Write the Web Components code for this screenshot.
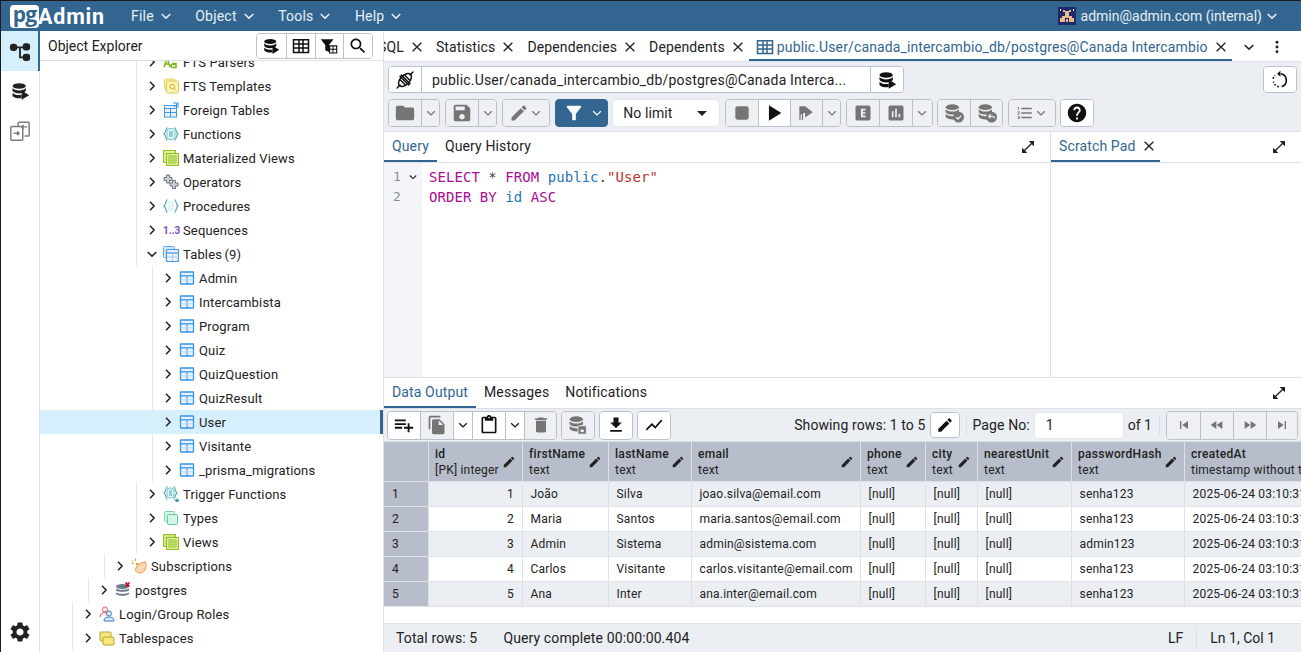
<!DOCTYPE html>
<html lang="en">
<head>
<meta charset="utf-8">
<title>pgAdmin</title>
<style>
html, body { margin: 0; height: 100%; overflow: hidden; background: #1b1b1b; }
body { padding: 1px 0 0 1px; box-sizing: border-box; font: 14px Roboto, "Liberation Sans", sans-serif; color: #222; }
pg-app { height: 651px; }
</style>
</head>
<body>
<pg-app></pg-app>
<script>
const M = (d, fill = 'currentColor') => `<path fill="${fill}" d="${d}"/>`;
const DB = (c = 'currentColor') => `<ellipse cx="10" cy="5" rx="8" ry="3.4" fill="${c}"/><path fill="${c}" d="M2 7.4c1.5 2 4.6 2.9 8 2.9s6.500-.9 8-2.900V11c-1.500 2-4.600 2.900-8 2.900S3.500 13 2 11zM2 13c1.500 2 4.600 2.900 8 2.900 1 0 2-.1 3-.3v3.900c-1 .2-2 .3-3 .3-3.400 0-6.500-1.100-8-2.900z"/>`;
const ICONS = {
  right: '<path d="M9 5.500l6.200 6.500L9 18.500" fill="none" stroke="currentColor" stroke-width="2.200"/>',
  down: '<path d="M5.500 9l6.500 6.200L18.500 9" fill="none" stroke="currentColor" stroke-width="2.200"/>',
  close: '<path d="M5.500 5.500l13 13M18.500 5.500l-13 13" fill="none" stroke="currentColor" stroke-width="2"/>',
  expand: M('M21 11V3h-8l3.290 3.290-10 10L3 13v8h8l-3.290-3.290 10-10z'),
  search: M('M15.500 14h-.79l-.28-.27C15.410 12.590 16 11.110 16 9.500 16 5.910 13.090 3 9.500 3S3 5.910 3 9.500 5.910 16 9.500 16c1.610 0 3.090-.59 4.230-1.570l.27.280v.79l5 4.990L20.490 19l-4.990-5zm-6 0C7.010 14 5 11.990 5 9.500S7.010 5 9.500 5 14 7.010 14 9.500 11.990 14 9.500 14z'),
  settings: M('M19.140 12.940c.04-.3.06-.61.06-.94 0-.32-.02-.64-.07-.94l2.030-1.580c.18-.14.23-.41.12-.61l-1.920-3.320c-.12-.22-.37-.29-.59-.22l-2.390.96c-.5-.38-1.030-.7-1.620-.94l-.36-2.540c-.04-.24-.24-.41-.48-.41h-3.840c-.24 0-.43.17-.47.41l-.36 2.540c-.59.24-1.130.57-1.620.94l-2.390-.96c-.22-.08-.47 0-.59.22L2.740 8.870c-.12.21-.08.47.12.61l2.030 1.580c-.05.3-.09.63-.09.94s.02.64.07.94l-2.030 1.580c-.18.14-.23.41-.12.61l1.920 3.320c.12.22.37.29.59.22l2.390-.96c.5.38 1.030.7 1.620.94l.36 2.540c.05.24.24.41.48.41h3.840c.24 0 .44-.17.47-.41l.36-2.540c.59-.24 1.130-.56 1.620-.94l2.390.96c.22.08.47 0 .59-.22l1.920-3.320c.12-.22.07-.47-.12-.61l-2.010-1.580zM12 15.600c-1.980 0-3.600-1.620-3.600-3.600s1.620-3.600 3.600-3.600 3.600 1.620 3.600 3.600-1.620 3.600-3.600 3.600z'),
  folder: M('M10 4H4c-1.100 0-1.990.9-1.990 2L2 18c0 1.100.9 2 2 2h16c1.100 0 2-.9 2-2V8c0-1.100-.9-2-2-2h-8l-2-2z'),
  save: M('M17 3H5c-1.110 0-2 .9-2 2v14c0 1.100.89 2 2 2h14c1.100 0 2-.9 2-2V7l-4-4zm-5 16c-1.660 0-3-1.340-3-3s1.340-3 3-3 3 1.340 3 3-1.340 3-3 3zm3-10H5V5h10v4z'),
  pencil: M('M3 17.250V21h3.750L17.810 9.940l-3.750-3.750L3 17.250zM20.710 7.040c.39-.39.39-1.020 0-1.410l-2.340-2.340c-.39-.39-1.020-.39-1.410 0l-1.830 1.830 3.750 3.750 1.830-1.830z'),
  filter: M('M4.250 5.610C6.270 8.200 10 13 10 13v6c0 .55.45 1 1 1h2c.55 0 1-.45 1-1v-6s3.720-4.800 5.740-7.390c.51-.66.04-1.610-.79-1.610H5.040c-.83 0-1.300.95-.79 1.610z'),
  stop: '<rect x="4" y="4" width="16" height="16" rx="2.500" fill="currentColor"/>',
  play: M('M6.500 3.500v17L20 12z'),
  runpart: M('M4 4h7l9 7-9 6.500V12H8.500v8H4z') + '<path d="M5.500 13.500h1.500V20H5.500z" fill="#eef0f4"/>',
  ebox: '<path fill="currentColor" fill-rule="evenodd" d="M5 3h14a2 2 0 0 1 2 2v14a2 2 0 0 1-2 2H5a2 2 0 0 1-2-2V5a2 2 0 0 1 2-2zm4.500 4v10h5.500v-2h-3.200v-2h3.200v-2h-3.200V9h3.200V7z"/>',
  chart: M('M19 3H5c-1.100 0-2 .9-2 2v14c0 1.100.9 2 2 2h14c1.100 0 2-.9 2-2V5c0-1.100-.9-2-2-2zM9 17H7v-7h2v7zm4 0h-2V7h2v10zm4 0h-2v-4h2v4z'),
  numlist: M('M2 17h2v.5H3v1h1v.5H2v1h3v-4H2v1zm1-9h1V4H2v1h1v3zm-1 3h1.800L2 13.100v.9h3v-1H3.200L5 10.900V10H2v1zm5-6v2h14V5H7zm0 14h14v-2H7v2zm0-6h14v-2H7v2z'),
  help: M('M12 2C6.480 2 2 6.480 2 12s4.480 10 10 10 10-4.480 10-10S17.520 2 12 2zm1 17h-2v-2h2v2zm2.070-7.750l-.9.920C13.450 12.900 13 13.500 13 15h-2v-.5c0-1.100.45-2.100 1.170-2.830l1.240-1.260c.37-.36.59-.86.59-1.410 0-1.100-.9-2-2-2s-2 .9-2 2H8c0-2.210 1.790-4 4-4s4 1.790 4 4c0 .88-.36 1.680-.93 2.250z'),
  addrow: M('M14 10H2v2h12v-2zm0-4H2v2h12V6zm4 8v-4h-2v4h-4v2h4v4h2v-4h4v-2h-4zM2 16h8v-2H2v2z'),
  copy: M('M16 1H4c-1.100 0-2 .9-2 2v14h2V3h12V1zm-1 4l6 6v10c0 1.100-.9 2-2 2H7.990C6.890 23 6 22.100 6 21l.01-14c0-1.100.89-2 1.990-2h7zm-1 7h5.500L14 6.500V12z'),
  paste: M('M19 2h-4.180C14.400.84 13.300 0 12 0c-1.300 0-2.400.84-2.820 2H5c-1.100 0-2 .9-2 2v16c0 1.100.9 2 2 2h14c1.100 0 2-.9 2-2V4c0-1.100-.9-2-2-2zm-7 0c.55 0 1 .45 1 1s-.45 1-1 1-1-.45-1-1 .45-1 1-1zm7 18H5V4h2v3h10V4h2v16z'),
  trash: M('M6 19c0 1.100.9 2 2 2h8c1.100 0 2-.9 2-2V7H6v12zM19 4h-3.500l-1-1h-5l-1 1H5v2h14V4z'),
  download: M('M19 9h-4V3H9v6H5l7 7 7-7zM5 18v2h14v-2H5z'),
  graph: M('M3.500 18.490l6-6.010 4 4L22 6.920l-1.410-1.410-7.090 7.970-4-4L2 16.990z'),
  first: M('M6 6h2v12H6zm3.500 6l8.500 6V6z'),
  prev: M('M11 18V6l-8.500 6 8.500 6zm.5-6l8.500 6V6l-8.500 6z'),
  next: M('M4 18l8.500-6L4 6v12zm9-12v12l8.500-6L13 6z'),
  last: M('M6 18l8.500-6L6 6v12zM16 6v12h2V6h-2z'),
  dots: '<circle cx="12" cy="5" r="2.200" fill="currentColor"/><circle cx="12" cy="12" r="2.200" fill="currentColor"/><circle cx="12" cy="19" r="2.200" fill="currentColor"/>',
  reset: '<path d="M13 4.500a8 8 0 0 1 1 15.500" fill="none" stroke="currentColor" stroke-width="2"/><path d="M10.500 20.200a8 8 0 0 1-6.300-6.200M3.800 10.500a8 8 0 0 1 2.500-4" fill="none" stroke="currentColor" stroke-width="2" stroke-dasharray="2 2"/><path d="M12.500 1l-4 3.500 4 3.500z" fill="currentColor"/>',
  plug: '<g fill="none" stroke="currentColor" stroke-width="1.800" stroke-linecap="round"><path d="M2.500 21.500l3.500-3.500M21.500 2.500L18 6"/><ellipse cx="12" cy="12" rx="9.500" ry="5.500" transform="rotate(-45 12 12)"/><path d="M6 7.500l10.500 10.500M7.500 6L18 16.500M12 6.500l5.500 5.500M6.500 12l5.500 5.500" /></g>',
  dbrun: `<g transform="translate(1 1)">${DB()}</g>` + M('M14 11.500l9 5.500-9 5.500z'),
  dbcheck: `${DB()}<circle cx="17.500" cy="17" r="6.500" fill="currentColor"/><path d="M14.500 17l2.200 2.200 4-4" fill="none" stroke="#ebeef3" stroke-width="1.600"/>`,
  dbundo: `${DB()}<circle cx="17.500" cy="17" r="6.500" fill="currentColor"/><path d="M14 16h4.500a2.500 2.500 0 0 1 2.500 2.500M16.500 13.500L14 16l2.500 2.500" fill="none" stroke="#ebeef3" stroke-width="1.500"/>`,
  dbsave: `${DB()}<rect x="12" y="13" width="10" height="10" rx="1" fill="currentColor" stroke="#ebeef3"/><rect x="15" y="17.500" width="4" height="3" fill="#ebeef3"/>`,
  grid: '<path fill="currentColor" fill-rule="evenodd" d="M1 2.500h22v19H1zm2 2v3.700h5.300V4.500zm7.300 0v3.700h3.400V4.500zm5.400 0v3.700H21V4.500zM3 10.200v3.600h5.300v-3.600zm7.300 0v3.600h3.400v-3.600zm5.400 0v3.600H21v-3.600zM3 15.800v3.700h5.300v-3.700zm7.300 0v3.700h3.400v-3.700zm5.400 0v3.700H21v-3.700z"/>',
  filtergrid: M('M1 3h17l-6 7.500V20l-5-2.500v-7z') + '<path fill="currentColor" fill-rule="evenodd" d="M12 11h11v11H12zm1.500 1.500v3h3.200v-3zm4.500 0v3h3.500v-3zm-4.500 4.500v3.500h3.200V17zm4.500 0v3.500h3.500V17z"/>',
  schema: '<g stroke="currentColor" stroke-width="2" fill="none"><path d="M5 8h14M12 8v11h7"/></g><rect x="1" y="4" width="8" height="8" rx="3.500" fill="currentColor"/><rect x="15" y="3.500" width="8" height="8" rx="3" fill="currentColor"/><rect x="15" y="15" width="8" height="8" rx="3" fill="currentColor"/>',
  compare: '<g fill="none" stroke="currentColor" stroke-width="1.600"><path d="M10 6.500V3.500a1 1 0 0 1 1-1h10a1 1 0 0 1 1 1v13a1 1 0 0 1-1 1h-4"/><rect x="2" y="7" width="13" height="15" rx="1"/><path d="M20 7.500h-6M16 5.500l-2 2 2 2M5 14.500h6M9 12.500l2 2-2 2"/></g>'
};
const TREE = {
  parsers: '<path fill="none" stroke="#7cb518" stroke-width="1.500" d="M1 13l3-9 3 9M2 10h4M9 9.500h4v4H9.500a1.500 1.500 0 0 1 0-3H13"/>',
  templates: '<rect x="1.500" y="1" width="11" height="11" rx="2" fill="#fff3ba" stroke="#e2cc55"/><rect x="3.500" y="3" width="12" height="12" rx="2" fill="#fdf3b4" stroke="#dcc64e"/><circle cx="9.300" cy="8.500" r="2.300" fill="none" stroke="#c9ae2c"/><path d="M11 10.300l2 2" stroke="#c9ae2c"/>',
  foreign: '<rect x="1.500" y="3.500" width="12" height="11.500" fill="#eef1f4" stroke="#3d9ae8"/><path d="M1.500 6.500h12M1.500 10.500h12M7.500 6.500V15" stroke="#3d9ae8" stroke-width="1" fill="none"/><path d="M10 1h5v5M15 1l-4 4" stroke="#2a8fe0" fill="none"/>',
  functions: '<g fill="none" stroke="#4fa9b6" stroke-width="1.200"><path d="M4.500 1.500C2.500 2 3.500 6.500 1 8c2.500 1.500 1.500 6 3.500 6.500M11.500 1.500C13.500 2 12.500 6.500 15 8c-2.500 1.500-1.500 6-3.500 6.500"/></g><rect x="4" y="2.500" width="8" height="11" rx="3" fill="#e3f5f6" stroke="#7cc6cf"/><path d="M6 6h4M6 8h4M6 10h4" stroke="#4fa9b6"/>',
  matviews: '<rect x=".5" y=".5" width="12" height="12" fill="#dcef9e" stroke="#93c01f"/><rect x="3.500" y="3.500" width="12" height="12" fill="#dcef9e" stroke="#93c01f"/><rect x="6" y="6" width="7" height="7" fill="none" stroke="#93c01f"/><rect x="8" y="8" width="3" height="3" fill="none" stroke="#93c01f"/>',
  operators: '<path fill="#c9ced6" stroke="#6f7782" d="M3.500 1h3v2.500H9v3H6.500V9h-3V6.500H1v-3h2.500zM9.500 6.500h3V9H15v3h-2.500v2.500h-3V12H7V9h2.500z"/>',
  procedures: '<g fill="none" stroke-width="1.200"><path stroke="#4fa9b6" d="M4.500 1.500C2.500 2 3.500 6.500 1 8c2.500 1.500 1.500 6 3.500 6.500M11.500 1.500C13.500 2 12.500 6.500 15 8c-2.500 1.500-1.500 6-3.500 6.500"/></g><path fill="#e3f5f6" d="M5 3h6v10H5z"/>',
  tables: '<rect x=".5" y=".5" width="11" height="11" rx="1" fill="#d8e9fa" stroke="#5aa9ee"/><rect x="3.500" y="3.500" width="12" height="12" rx="1" fill="#eef1f4" stroke="#3d9ae8" stroke-width="1.200"/><path d="M3.500 7h12M3.500 11h12M9.500 7v8" stroke="#a9cdee" fill="none"/><path d="M3.500 7h12" stroke="#3d9ae8"/>',
  table: '<rect x="1.500" y="2" width="13" height="12" rx=".5" fill="#eef1f4" stroke="#2e96ea" stroke-width="1.300"/><path d="M1.500 5.800h13" stroke="#2e96ea" stroke-width="1.300"/><path d="M8 5.800V14" stroke="#2e96ea" stroke-width="1"/><path d="M1.500 9.800h13" stroke="#b9d7f2"/>',
  trigger: '<g fill="none" stroke="#4fa9b6" stroke-width="1.100"><path d="M4.500 .5C2.500 1 3.500 5.500 1 7c2.500 1.500 1.500 6 3.500 6.500M10.500 .5C12.500 1 11.500 5.500 14 7c-2.500 1.500-1.500 6-3.500 6.500"/></g><rect x="4" y="2" width="7" height="10" rx="3" fill="#e3f5f6" stroke="#7cc6cf"/><path d="M6 5h3M6 7h3M6 9h3" stroke="#4fa9b6"/><path d="M12 14.500h4M14 12.500v4" stroke="#2f8fa0" stroke-width="1.300"/>',
  types: '<rect x="1.500" y="1.500" width="10" height="10" rx="1" fill="#d3f3e3" stroke="#7fd4ae"/><rect x="4.500" y="4.500" width="10" height="10" rx="1" fill="#d3f5e5" stroke="#62c99c"/>',
  views: '<rect x=".5" y=".5" width="12" height="12" fill="#cfe98a" stroke="#93c01f"/><rect x="3.500" y="3.500" width="12" height="12" fill="#dcef9e" stroke="#93c01f"/><rect x="6" y="6" width="7" height="7" fill="none" stroke="#93c01f"/><rect x="8" y="8" width="3" height="3" fill="none" stroke="#93c01f"/>',
  subs: '<path d="M7 6.500L14 3.500c2 4 1 9-2.500 11-3 1.500-6 0-7.500-2.500z" fill="#fbd9b0" stroke="#ef9a4a"/><circle cx="6" cy="6" r="1.300" fill="#ef9a4a"/><path d="M1 2.500l2 2M4.500.5v2.500M.5 5.500h2" stroke="#ef9a4a" fill="none"/>',
  server: '<ellipse cx="7.500" cy="4.500" rx="6.500" ry="2.500" fill="#6c7a89"/><path d="M1 6.500c1.500 1.700 11.500 1.700 13 0v2c-1.500 1.700-11.500 1.700-13 0zM1 10.500c1.500 1.700 11.500 1.700 13 0v1.500c-1.500 2.400-11.500 2.400-13 0z" fill="#6c7a89"/><path d="M10.500.5l4 4M14.500.5l-4 4" stroke="#d0021b" stroke-width="1.600"/>',
  roles: '<circle cx="6" cy="3.500" r="2.600" fill="#fbe5e5" stroke="#d9686b"/><path d="M1 11c0-3 2-4.500 5-4.500s4 1 4 2.500" fill="#fbe5e5" stroke="#d9686b"/><circle cx="10" cy="7.500" r="2.600" fill="#d9e8fa" stroke="#3f7fc9"/><path d="M5 15c0-3 2-4 5-4s5 1 5 4z" fill="#d9e8fa" stroke="#3f7fc9"/>',
  spaces: '<rect x="1" y="2" width="11" height="9" rx="1" fill="#f7e77f" stroke="#b9a431"/><rect x="4" y="7" width="11" height="8" rx="1" fill="#f7e77f" stroke="#b9a431"/>'
};

class PgIcon extends HTMLElement {
  constructor() {
    super();
    this.attachShadow({ mode: 'open' });
  }
  connectedCallback() {
    const size = this.getAttribute('size') || 16;
    const name = this.getAttribute('name');
    const tree = TREE[name];
    this.shadowRoot.innerHTML = `<style>:host{display:inline-flex;flex:none;align-items:center;justify-content:center;width:${size}px;height:${size}px}svg{display:block}</style>
      <svg width="${size}" height="${size}" viewBox="${tree ? '0 0 16 16' : '0 0 24 24'}">${tree || ICONS[name] || ''}</svg>`;
  }
}
customElements.define('pg-icon', PgIcon);

class PgTopbar extends HTMLElement {
  constructor() {
    super();
    this.attachShadow({ mode: 'open' }).innerHTML = `<style>
      :host{display:flex;align-items:center;height:30px;background:#326690;color:#fff;font-size:14px;letter-spacing:.2px;padding-left:9px}
      .logo{display:flex;align-items:center;width:121px;flex:none}
      .pg{background:#fff;color:#326690;font:700 21px/19px "Open Sans",Roboto,sans-serif;border-radius:4px;width:29px;height:23px;text-align:center;letter-spacing:-.8px;flex:none;margin-right:-1px}
      .adm{font:700 21.500px/23px Roboto,sans-serif;letter-spacing:.8px}
      .menu{display:flex;align-items:center;gap:4px;margin-right:21.500px;color:#e9eef3}
      .user{margin-left:auto;display:flex;align-items:center;margin-right:21px;color:#e9eef3;letter-spacing:0}
    </style>
    <div class="logo"><span class="pg">pg</span><span class="adm">Admin</span></div>
    <div class="menu">File<pg-icon name="down" size="16"></pg-icon></div>
    <div class="menu">Object<pg-icon name="down" size="16"></pg-icon></div>
    <div class="menu">Tools<pg-icon name="down" size="16"></pg-icon></div>
    <div class="menu">Help<pg-icon name="down" size="16"></pg-icon></div>
    <div class="user">
      <svg width="18" height="18" viewBox="0 0 18 18"><rect width="18" height="18" fill="#1c2a6b"/><g fill="#e8b98a"><rect x="7" y="4" width="4" height="5"/><rect x="5" y="3" width="2" height="2"/><rect x="11" y="3" width="2" height="2"/><rect x="4" y="9" width="10" height="2"/><rect x="2" y="11" width="5" height="4"/><rect x="11" y="11" width="5" height="4"/><rect x="8" y="12" width="2" height="3"/></g><rect x="2" y="2" width="1" height="2" fill="#fff"/><rect x="15" y="2" width="1" height="2" fill="#fff"/></svg>
      <span style="margin:0 2px 0 5px">admin@admin.com (internal)</span><pg-icon name="down" size="16"></pg-icon>
    </div>`;
  }
}
customElements.define('pg-topbar', PgTopbar);

class PgActivity extends HTMLElement {
  constructor() {
    super();
    this.attachShadow({ mode: 'open' }).innerHTML = `<style>
      :host{display:flex;flex-direction:column;width:38px;flex:none;background:#fff;border-right:1px solid #dde0e6;color:#222}
      .it{height:40px;display:flex;align-items:center;justify-content:center;box-sizing:border-box}
      .on{background:#d6effc;border-right:2px solid #326690;margin-right:-1px}
      .end{margin-top:auto}
    </style>
    <div class="it on"><pg-icon name="schema" size="22"></pg-icon></div>
    <div class="it"><pg-icon name="dbrun" size="20"></pg-icon></div>
    <div class="it" style="color:#7d7d7d"><pg-icon name="compare" size="22"></pg-icon></div>
    <div class="it end"><pg-icon name="settings" size="24"></pg-icon></div>`;
  }
}
customElements.define('pg-activity', PgActivity);

class PgBtn extends HTMLElement {
  constructor() {
    super();
    this.attachShadow({ mode: 'open' });
  }
  connectedCallback() {
    const w = this.getAttribute('w') || 32;
    const off = this.hasAttribute('off');
    const size = this.getAttribute('size') || 20;
    const second = this.getAttribute('after');
    this.shadowRoot.innerHTML = `<style>
      :host{display:flex;align-items:center;justify-content:center;box-sizing:border-box;width:${w}px;background:${off ? '#eef0f4' : '#fff'};color:${off ? '#757575' : '#111'}}
      :host(:not(:first-child)){border-left:1px solid #bac1cd}
    </style><pg-icon name="${this.getAttribute('icon')}" size="${size}"></pg-icon>${second ? `<pg-icon name="${second}" size="14"></pg-icon>` : ''}`;
  }
}
customElements.define('pg-btn', PgBtn);

class PgGroup extends HTMLElement {
  constructor() {
    super();
    this.attachShadow({ mode: 'open' }).innerHTML = `<style>
      :host{display:flex;flex:none;border:1px solid #bac1cd;border-radius:4px;overflow:hidden;background:#fff}
    </style><slot></slot>`;
  }
}
customElements.define('pg-group', PgGroup);

class PgTreeRow extends HTMLElement {
  constructor() {
    super();
    this.attachShadow({ mode: 'open' });
  }
  connectedCallback() {
    const guide = +this.getAttribute('guide');
    const open = this.hasAttribute('open');
    const icon = this.getAttribute('icon');
    const lead = icon === 'seq'
      ? '<span class="seq">1..3</span>'
      : `<pg-icon name="${icon}" size="16"></pg-icon>`;
    this.shadowRoot.innerHTML = `<style>
      :host{display:flex;align-items:stretch;height:24px;box-sizing:border-box;padding-left:${guide - 40}px;color:#222}
      :host([selected]){background:#d6effc;border-right:3px solid #326690}
      .g{width:1px;background:#e6e8ec;flex:none}
      .r{display:flex;align-items:center;padding-left:7px}
      .c{margin-right:3px}
      .seq{width:16px;font:700 10px Roboto,sans-serif;color:#7a4fc4;text-align:center;flex:none;white-space:nowrap}
      .t{margin-left:4px;white-space:nowrap;font-size:13px;letter-spacing:.15px}
    </style><span class="g"></span><div class="r"><pg-icon class="c" name="${open ? 'down' : 'right'}" size="16"></pg-icon>${lead}<span class="t"><slot></slot></span></div>`;
  }
}
customElements.define('pg-tree-row', PgTreeRow);

class PgExplorer extends HTMLElement {
  constructor() {
    super();
    const fts = 136, tbl = 152;
    const rows = [
      [fts, 'parsers', 'FTS Parsers'], [fts, 'templates', 'FTS Templates'], [fts, 'foreign', 'Foreign Tables'],
      [fts, 'functions', 'Functions'], [fts, 'matviews', 'Materialized Views'], [fts, 'operators', 'Operators'],
      [fts, 'procedures', 'Procedures'], [fts, 'seq', 'Sequences'], [fts, 'tables', 'Tables<span style="margin-left:-1px"> </span>(9)', 'open'],
      [tbl, 'table', 'Admin'], [tbl, 'table', 'Intercambista'], [tbl, 'table', 'Program'], [tbl, 'table', 'Quiz'],
      [tbl, 'table', 'QuizQuestion'], [tbl, 'table', 'QuizResult'], [tbl, 'table', 'User', 'selected'],
      [tbl, 'table', 'Visitante'], [tbl, 'table', '_prisma_migrations'],
      [fts, 'trigger', 'Trigger Functions'], [fts, 'types', 'Types'], [fts, 'views', 'Views'],
      [104, 'subs', 'Subscriptions'], [88, 'server', 'postgres'], [72, 'roles', 'Login/Group Roles'], [72, 'spaces', 'Tablespaces']
    ];
    this.attachShadow({ mode: 'open' }).innerHTML = `<style>
      :host{display:flex;flex-direction:column;width:344px;flex:none;box-sizing:border-box;border-right:1px solid #dde0e6;background:#fff;overflow:hidden}
      .head{display:flex;align-items:center;height:30px;box-sizing:border-box;border-bottom:1px solid #dde0e6;padding:0 10px 0 8px;flex:none}
      .title{flex:1;font-size:14px}
      pg-group{height:24px}
      .tree{flex:1;overflow:hidden}
      .in{margin-top:-11px}
    </style>
    <div class="head"><span class="title">Object Explorer</span>
      <pg-group>
        <pg-btn w="28.75" icon="dbrun" size="18"></pg-btn><pg-btn w="28.75" icon="grid" size="18"></pg-btn>
        <pg-btn w="28.75" icon="filtergrid" size="18"></pg-btn><pg-btn w="28.75" icon="search" size="20"></pg-btn>
      </pg-group></div>
    <div class="tree"><div class="in">${rows.map(([g, i, t, f]) => `<pg-tree-row guide="${g}" icon="${i}" ${f || ''}>${t}</pg-tree-row>`).join('')}</div></div>`;
  }
}
customElements.define('pg-explorer', PgExplorer);

class PgTab extends HTMLElement {
  constructor() {
    super();
    this.attachShadow({ mode: 'open' });
  }
  connectedCallback() {
    const closable = this.hasAttribute('closable');
    const icon = this.getAttribute('icon');
    this.shadowRoot.innerHTML = `<style>
      :host{display:flex;align-items:center;flex:none;height:100%;box-sizing:border-box;padding:0 ${closable ? 3 : 8}px 0 8px;white-space:nowrap;color:#222;letter-spacing:.13px;border-bottom:2px solid transparent}
      :host([active]){color:#326690;border-bottom-color:#326690}
      .x{color:#222;margin-left:5px}
      .i{color:#326690;margin:0 3px 0 -1px}
    </style>${icon ? `<pg-icon class="i" name="${icon}" size="18"></pg-icon>` : ''}<slot></slot>${closable ? '<pg-icon class="x" name="close" size="16"></pg-icon>' : ''}`;
  }
}
customElements.define('pg-tab', PgTab);

class PgToolbar extends HTMLElement {
  constructor() {
    super();
    this.attachShadow({ mode: 'open' }).innerHTML = `<style>
      :host{display:flex;flex-direction:column;gap:6px;flex:none;background:#ebeef3;padding:4px 4px 4px;border-bottom:1px solid #dde0e6}
      .row{display:flex;gap:4.600px}
      .r1{height:27px}
      .r2{height:28px}
      .conn{width:514px}
      .addr{flex:1;display:flex;align-items:center;padding-left:10px;font-size:14px;letter-spacing:.2px;background:#fff;border-left:1px solid #bac1cd;white-space:nowrap}
      .filter{background:#326690;border-color:#326690;color:#fff;width:53px;box-sizing:border-box;display:flex;align-items:center;justify-content:space-between;padding:0 3px 0 7px}
      .sel{width:108px;box-sizing:border-box;background:#fff;border:1px solid #e4e7ec;border-radius:4px;display:flex;align-items:center;padding:0 0 0 10px;flex:none;letter-spacing:.1px}
      .caret{margin-left:auto;margin-right:12px;width:0;height:0;border:5px solid transparent;border-top-color:#222;border-bottom:0}
      .end{margin-left:auto}
      pg-group{flex:none}
    </style>
    <div class="row r1">
      <pg-group class="conn"><pg-btn w="32" icon="plug" size="20"></pg-btn><div class="addr">public.User/canada_intercambio_db/postgres@Canada Interca...</div><pg-btn w="33" icon="dbrun" size="20" style="border-left:1px solid #bac1cd"></pg-btn></pg-group>
      <pg-group class="end"><pg-btn w="32" icon="reset" size="20"></pg-btn></pg-group>
    </div>
    <div class="row r2">
      <pg-group><pg-btn off icon="folder" size="22"></pg-btn><pg-btn off w="18.4" icon="down" size="14"></pg-btn></pg-group>
      <pg-group><pg-btn off icon="save" size="22"></pg-btn><pg-btn off w="18.4" icon="down" size="14"></pg-btn></pg-group>
      <pg-group><pg-btn off w="46" icon="pencil" size="20" after="down"></pg-btn></pg-group>
      <pg-group class="filter"><pg-icon name="filter" size="22"></pg-icon><pg-icon name="down" size="14"></pg-icon></pg-group>
      <div class="sel">No limit<span class="caret"></span></div>
      <pg-group><pg-btn off icon="stop" size="20"></pg-btn><pg-btn icon="play" size="22"></pg-btn><pg-btn off icon="runpart" size="20"></pg-btn><pg-btn off w="18.6" icon="down" size="14"></pg-btn></pg-group>
      <pg-group><pg-btn off icon="ebox" size="20"></pg-btn><pg-btn off w="33" icon="chart" size="20"></pg-btn><pg-btn off w="19.6" icon="down" size="14"></pg-btn></pg-group>
      <pg-group><pg-btn off icon="dbcheck" size="20"></pg-btn><pg-btn off w="32" icon="dbundo" size="20"></pg-btn></pg-group>
      <pg-group><pg-btn off w="46" icon="numlist" size="18" after="down"></pg-btn></pg-group>
      <pg-group><pg-btn icon="help" size="22"></pg-btn></pg-group>
    </div>`;
  }
}
customElements.define('pg-toolbar', PgToolbar);

class PgEditor extends HTMLElement {
  constructor() {
    super();
    this.attachShadow({ mode: 'open' }).innerHTML = `<style>
      :host{display:flex;flex:1;font:14px/20px "DejaVu Sans Mono",monospace;min-height:0;letter-spacing:.05px}
      .gut{width:38px;background:#f3f5f8;color:#8a8f96;padding:4px 3px 0 9px;box-sizing:border-box;flex:none;font-size:13px;display:grid;grid-template-columns:1fr 12px;grid-auto-rows:20px;align-items:center}
      .gut pg-icon{color:#222}
      .code{padding:4px 0 0 7px;white-space:pre;color:#444}
      .k{color:#aa0d91}.v{color:#1f74b8}.s{color:#b8352d}
    </style><div class="gut"><span>1</span><pg-icon name="down" size="12"></pg-icon><span>2</span></div>
    <div class="code"><span class="k">SELECT</span> * <span class="k">FROM</span> <span class="v">public</span>.<span class="s">"User"</span>
<span class="k">ORDER BY</span> <span class="v">id</span> <span class="k">ASC</span></div>`;
  }
}
customElements.define('pg-editor', PgEditor);

class PgPanelHead extends HTMLElement {
  constructor() {
    super();
    this.attachShadow({ mode: 'open' }).innerHTML = `<style>
      :host{display:flex;align-items:stretch;height:31px;box-sizing:border-box;border-bottom:1px solid #dde0e6;flex:none;background:#fff}
      .sp{flex:1}
      pg-icon{align-self:center;margin-right:14px}
    </style><slot></slot><span class="sp"></span><pg-icon name="expand" size="16"></pg-icon>`;
  }
}
customElements.define('pg-panel-head', PgPanelHead);

class PgDataGrid extends HTMLElement {
  constructor() {
    super();
    const cols = [['id', '[PK] integer', 94], ['firstName', 'text', 86], ['lastName', 'text', 83], ['email', 'text', 169], ['phone', 'text', 65], ['city', 'text', 52], ['nearestUnit', 'text', 94], ['passwordHash', 'text', 113], ['createdAt', 'timestamp without time zone', 200]];
    const t = '2025-06-24 03:10:31.000';
    const data = [
      ['João', 'Silva', 'joao.silva@email.com', 'senha123'],
      ['Maria', 'Santos', 'maria.santos@email.com', 'senha123'],
      ['Admin', 'Sistema', 'admin@sistema.com', 'admin123'],
      ['Carlos', 'Visitante', 'carlos.visitante@email.com', 'senha123'],
      ['Ana', 'Inter', 'ana.inter@email.com', 'senha123']
    ];
    const head = cols.map(([n, ty], i) => `<div class="h"><div class="ht"><div>${n}</div><div>${ty}</div></div>${i < 8 ? '<pg-icon name="pencil" size="14"></pg-icon>' : ''}</div>`).join('');
    const body = data.map((r, i) => {
      const cls = i % 2 ? 'w' : 'g';
      const cells = [i + 1, r[0], r[1], r[2], '[null]', '[null]', '[null]', r[3], t];
      return `<div class="n">${i + 1}</div>` + cells.map((c, j) => `<div class="c ${cls} ${j === 0 ? 'num' : ''}">${c}</div>`).join('');
    }).join('');
    this.attachShadow({ mode: 'open' }).innerHTML = `<style>
      :host{display:block;flex:1;overflow:hidden;background:#fff;min-height:0}
      .t{display:grid;grid-template-columns:45px ${cols.map(c => c[2] + 'px').join(' ')};grid-template-rows:40px repeat(5,25px);width:1000px;font-size:12px;letter-spacing:.2px}
      .h,.n,.e{background:#b7bdca;border-right:1px solid #dde0e6;border-bottom:1px solid #dde0e6;box-sizing:border-box}
      .h{display:flex;align-items:center;justify-content:space-between;padding:0 6px;line-height:16px;white-space:nowrap;overflow:hidden}
      .ht{min-width:0;padding-top:1px}
      .ht div:first-child{font-weight:500;letter-spacing:.3px}
      .n{display:flex;align-items:center;padding-left:8px}
      .c{display:flex;align-items:center;padding:0 8px 0 7.500px;border-right:1px solid #dde0e6;border-bottom:1px solid #dde0e6;box-sizing:border-box;white-space:nowrap;overflow:hidden}
      .g{background:#ebeef3}.w{background:#fff}
      .num{justify-content:flex-end}
    </style><div class="t"><div class="e"></div>${head}${body}</div>`;
  }
}
customElements.define('pg-data-grid', PgDataGrid);

class PgGridToolbar extends HTMLElement {
  constructor() {
    super();
    this.attachShadow({ mode: 'open' }).innerHTML = `<style>
      :host{display:flex;align-items:center;height:33px;flex:none;box-sizing:border-box;background:#ebeef3;padding:0 3px;gap:4px;border-bottom:1px solid #dde0e6;letter-spacing:.1px}
      pg-group{height:27px}
      .sp{flex:1}
      .page{width:90px;height:27px;box-sizing:border-box;background:#fff;border:1px solid #e4e7ec;border-radius:4px;padding:0 11px;display:flex;align-items:center}
      .sep{width:1px;height:22px;background:#dde0e6}
    </style>
    <pg-group><pg-btn icon="addrow" size="22"></pg-btn><pg-btn off w="33" icon="copy" size="20"></pg-btn><pg-btn w="19" icon="down" size="14"></pg-btn><pg-btn w="33" icon="paste" size="20"></pg-btn><pg-btn w="19" icon="down" size="14"></pg-btn><pg-btn off icon="trash" size="20"></pg-btn></pg-group>
    <pg-group><pg-btn off icon="dbsave" size="20"></pg-btn></pg-group>
    <pg-group><pg-btn icon="download" size="20"></pg-btn></pg-group>
    <pg-group><pg-btn icon="graph" size="20"></pg-btn></pg-group>
    <span class="sp"></span>
    <span>Showing rows: 1 to 5</span>
    <pg-group style="height:24px"><pg-btn w="28" icon="pencil" size="18"></pg-btn></pg-group>
    <span class="sep" style="margin:0 2px"></span>
    <span>Page No:</span>
    <div class="page">1</div>
    <span style="letter-spacing:0">of 1</span>
    <span class="sep" style="margin:0 2.500px"></span>
    <pg-group><pg-btn off w="33" icon="first" size="16"></pg-btn><pg-btn off w="33" icon="prev" size="16"></pg-btn><pg-btn off w="33" icon="next" size="16"></pg-btn><pg-btn off w="31" icon="last" size="16"></pg-btn></pg-group>`;
  }
}
customElements.define('pg-grid-toolbar', PgGridToolbar);

class PgStatus extends HTMLElement {
  constructor() {
    super();
    this.attachShadow({ mode: 'open' }).innerHTML = `<style>
      :host{display:flex;align-items:center;height:29px;flex:none;box-sizing:border-box;background:#ebeef3;border-top:1px solid #dde0e6;padding:0 26px 0 12px;letter-spacing:.12px}
      .b{margin-left:26px}.sp{flex:1}
      .sep{width:1px;height:24px;background:#dde0e6;margin:0 13px}
      .z{letter-spacing:0}
    </style><span>Total rows: 5</span><span class="b">Query complete 00:00:00.404</span><span class="sp"></span><span class="z">LF</span><span class="sep"></span><span class="z">Ln 1, Col 1</span>`;
  }
}
customElements.define('pg-status', PgStatus);

class PgWorkspace extends HTMLElement {
  constructor() {
    super();
    this.attachShadow({ mode: 'open' }).innerHTML = `<style>
      :host{display:flex;flex-direction:column;flex:1;min-width:0;background:#fff;overflow:hidden}
      .tabs{display:flex;align-items:stretch;height:30px;flex:none;box-sizing:content-box;overflow:hidden;border-bottom:1px solid #dde0e6}
      .strip{display:flex;margin-left:-14px;flex:none;width:863px;overflow:hidden}
      .strip pg-tab{padding-top:3px}
      .more{display:flex;align-items:center;flex:1;background:#fff;gap:12px;padding:2px 0 0 8px}
      .top{display:flex;flex:none;height:245px;border-bottom:1px solid #dde0e6}
      .q{flex:1;display:flex;flex-direction:column;min-width:0}
      .sc{width:251px;flex:none;border-left:1px solid #dde0e6;display:flex;flex-direction:column;box-sizing:border-box}
      .out{flex:1;display:flex;flex-direction:column;min-height:0}
    </style>
    <div class="tabs"><div class="strip">
      <pg-tab closable>SQL</pg-tab><pg-tab closable>Statistics</pg-tab><pg-tab closable>Dependencies</pg-tab><pg-tab closable>Dependents</pg-tab>
      <pg-tab closable active icon="grid">public.User/canada_intercambio_db/postgres@Canada Intercambio</pg-tab></div>
      <div class="more"><pg-icon name="down" size="16"></pg-icon><pg-icon name="dots" size="16"></pg-icon></div>
    </div>
    <pg-toolbar></pg-toolbar>
    <div class="top">
      <div class="q"><pg-panel-head><pg-tab active>Query</pg-tab><pg-tab>Query History</pg-tab></pg-panel-head><pg-editor></pg-editor></div>
      <div class="sc"><pg-panel-head><pg-tab active closable>Scratch Pad</pg-tab></pg-panel-head></div>
    </div>
    <div class="out">
      <pg-panel-head><pg-tab active>Data Output</pg-tab><pg-tab>Messages</pg-tab><pg-tab>Notifications</pg-tab></pg-panel-head>
      <pg-grid-toolbar></pg-grid-toolbar>
      <pg-data-grid></pg-data-grid>
      <pg-status></pg-status>
    </div>`;
  }
}
customElements.define('pg-workspace', PgWorkspace);

class PgApp extends HTMLElement {
  constructor() {
    super();
    this.attachShadow({ mode: 'open' }).innerHTML = `<style>
      :host{display:flex;flex-direction:column;width:1300px;overflow:hidden}
      .body{display:flex;flex:1;min-height:0}
    </style><pg-topbar></pg-topbar><div class="body"><pg-activity></pg-activity><pg-explorer></pg-explorer><pg-workspace></pg-workspace></div>`;
  }
}
customElements.define('pg-app', PgApp);
</script>
</body>
</html>
